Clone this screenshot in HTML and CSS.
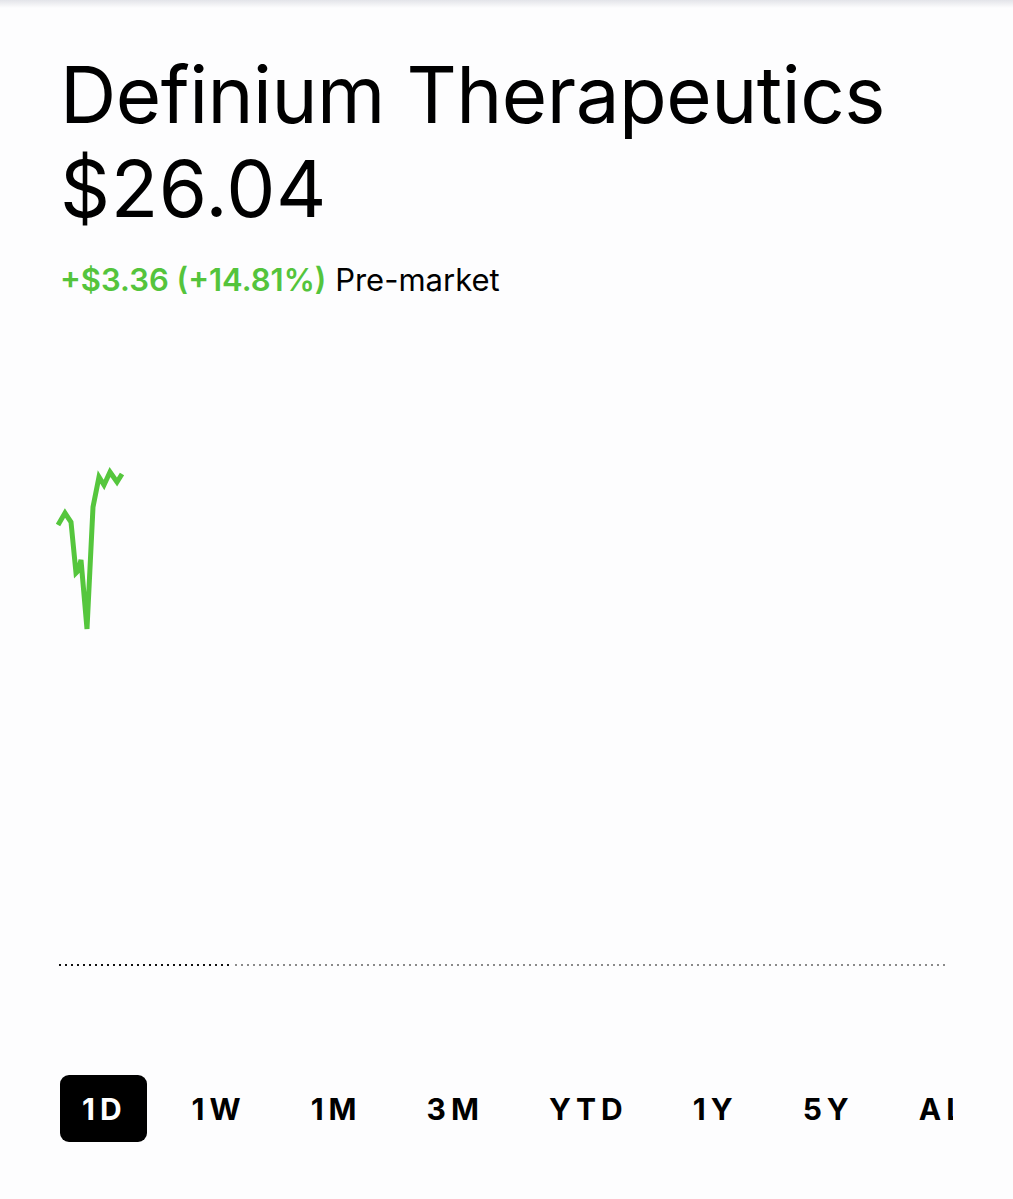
FILE: index.html
```html
<!DOCTYPE html>
<html lang="en">
<head>
  <meta charset="UTF-8">
  <meta name="viewport" content="width=device-width, initial-scale=1.0">
  <title>Definium Therapeutics</title>
  <link rel="stylesheet" href="styles.css">
</head>
<body>

  <!-- Top shadow strip -->
  <div class="top-strip"></div>

  <main class="page">

    <!-- Quote header -->
    <header class="quote">
      <h1 class="name">Definium Therapeutics</h1>
      <div class="price">$26.04</div>
      <div class="change"><span class="delta">+$3.36 (+14.81%)</span> Pre-market</div>
    </header>

    <!-- Intraday chart -->
    <div class="chart">
      <svg width="893" height="680" viewBox="0 0 893 680">
        <line x1="0" y1="643" x2="174" y2="643" class="base-prev"></line>
        <line x1="176" y1="643" x2="889" y2="643" class="base-rest"></line>
        <polyline class="trace" points="-1,203 6,191 12,200 17,251 19,249 22,238 28,307 34,185 40,155 45,163 51,150 58,160 63,152"></polyline>
      </svg>
    </div>

    <!-- Range selector -->
    <nav class="ranges">
      <button class="range active">1D</button>
      <button class="range">1W</button>
      <button class="range">1M</button>
      <button class="range">3M</button>
      <button class="range">YTD</button>
      <button class="range">1Y</button>
      <button class="range">5Y</button>
      <button class="range">ALL</button>
    </nav>

  </main>

</body>
</html>
```

FILE: styles.css
```css
/* Global styles */
body {
  margin: 0;
  padding: 0;
  background-color: #fdfdfe;
  color: #000;
  font-family: 'Inter', 'Liberation Sans', sans-serif;
}

.top-strip {
  height: 8px;
  background: linear-gradient(#e3e4e9, #fdfdfe);
}

.page {
  padding: 0 0 0 60px;
}

/* Quote header */
.quote {
  padding-top: 42px;
}

.name {
  margin: 0;
  font-size: 78px;
  font-weight: 400;
  line-height: 90px;
  letter-spacing: -0.5px;
}

.price {
  font-size: 78px;
  line-height: 90px;
  margin-top: 4px;
  letter-spacing: 0.6px;
}

.change {
  margin-top: 28px;
  font-size: 31px;
  line-height: 36px;
}

.delta {
  color: #54c43c;
  font-weight: 600;
}

/* Chart */
.chart {
  margin-top: 24px;
  margin-left: -1px;
}

.chart svg {
  display: block;
  overflow: visible;
}

.trace {
  fill: none;
  stroke: #55c63d;
  stroke-width: 5;
  stroke-linejoin: miter;
}

.base-prev {
  stroke: #111;
  stroke-width: 2;
  stroke-dasharray: 2 4;
}

.base-rest {
  stroke: #8a8a8a;
  stroke-width: 2;
  stroke-dasharray: 2 4;
}

/* Range selector */
.ranges {
  display: flex;
  gap: 23px;
  width: 893px;
  overflow: hidden;
  margin-top: 73px;
}

.range {
  flex: none;
  border: none;
  background: none;
  padding: 0 20px 0 22px;
  height: 67px;
  border-radius: 9px;
  font-family: 'Inter', 'Liberation Sans', sans-serif;
  font-size: 30px;
  font-weight: 700;
  letter-spacing: 5px;
  color: #000;
}

.range.active {
  background-color: #000;
  color: #fff;
}
```
